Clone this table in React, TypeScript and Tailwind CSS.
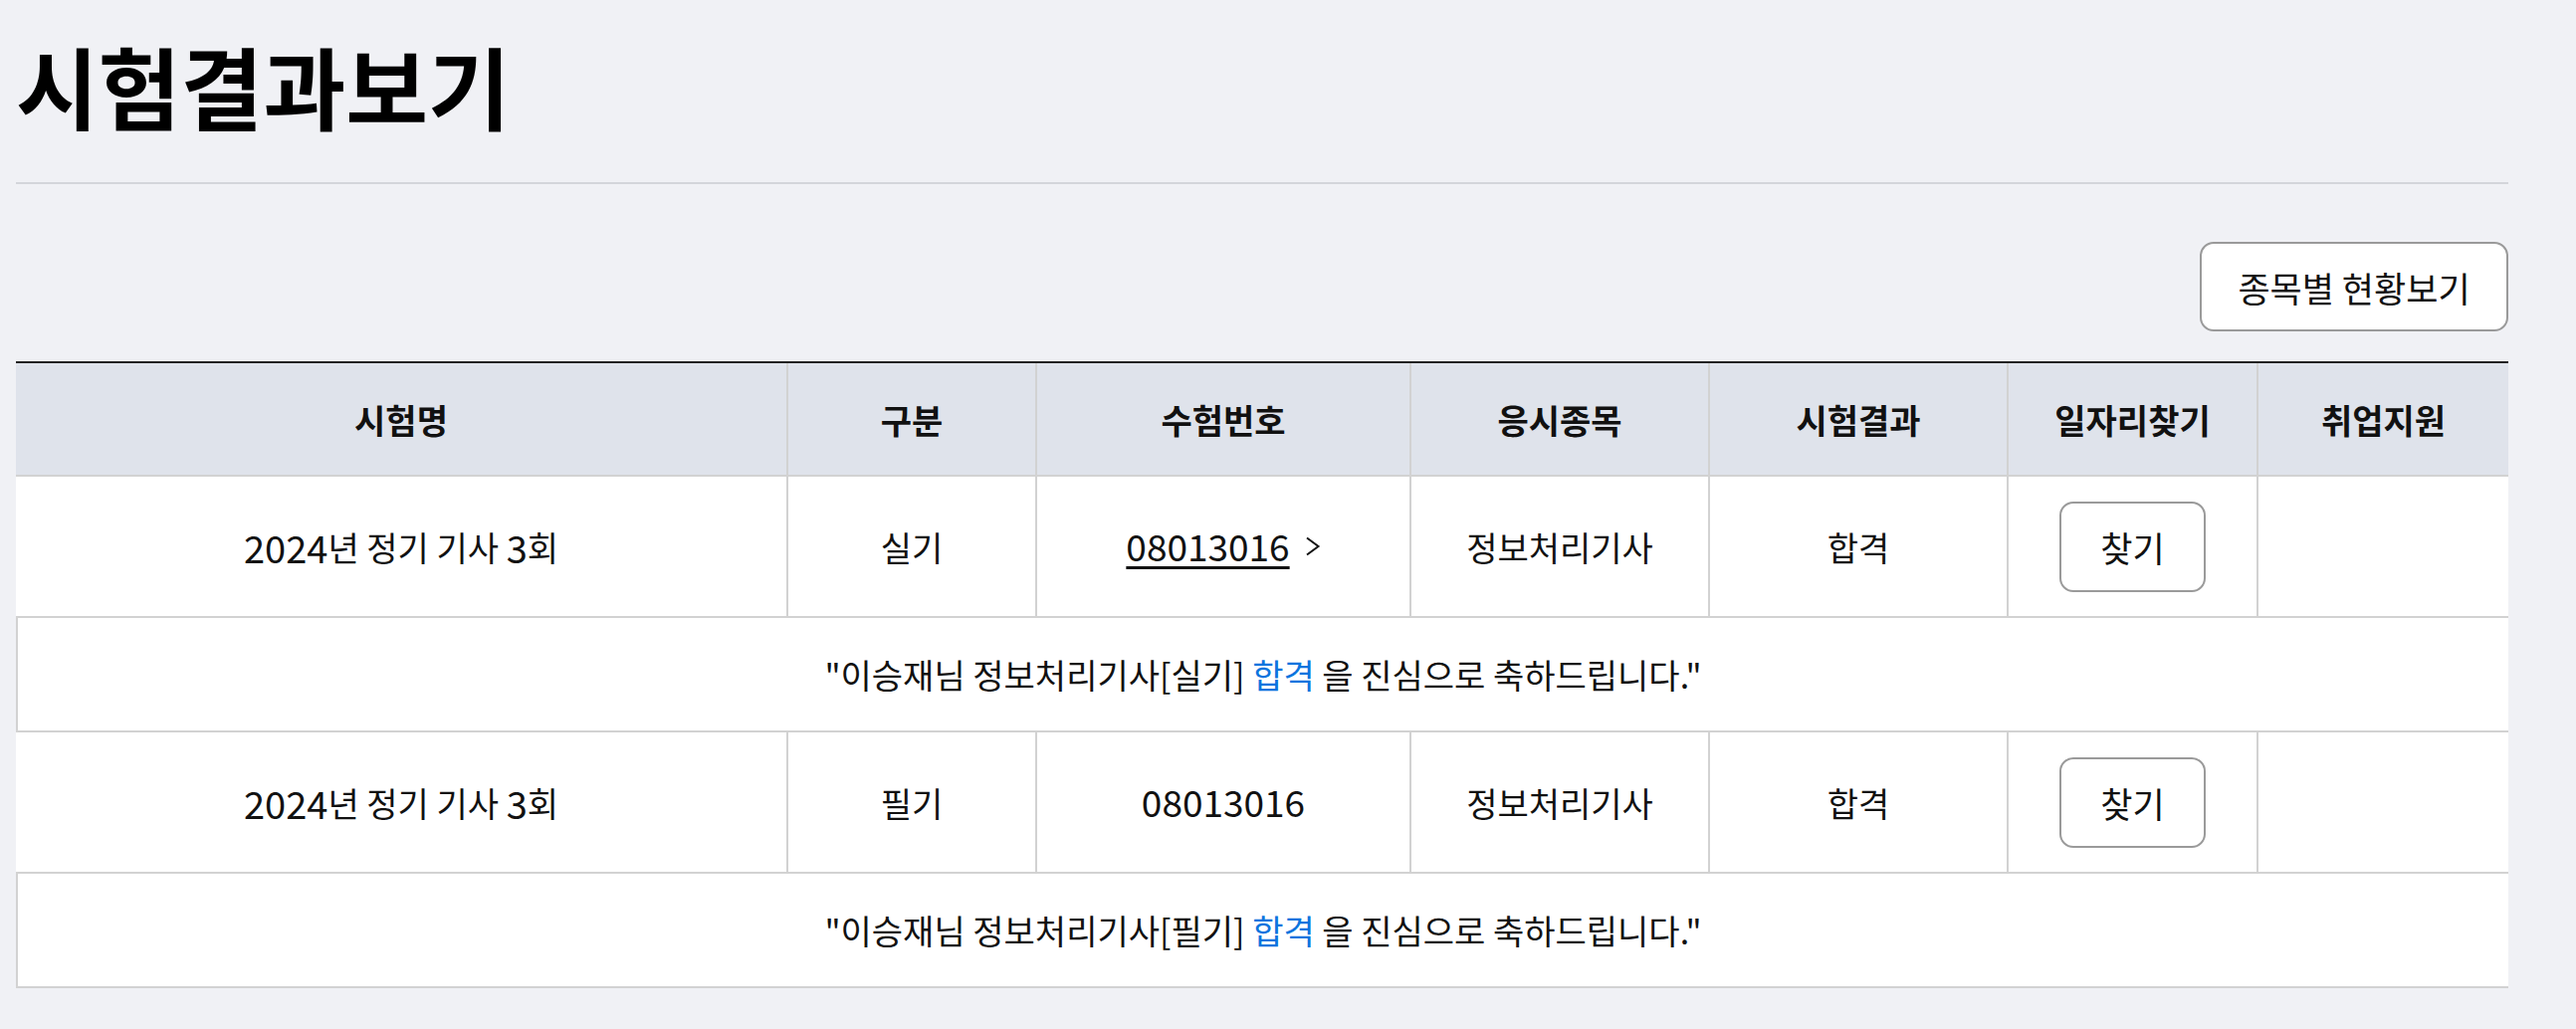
import React from "react";

const cols = ["w-[776px]", "w-[250px]", "w-[376px]", "w-[300px]", "w-[300px]", "w-[251px]", "w-[251px]"];

const headers = ["시험명", "구분", "수험번호", "응시종목", "시험결과", "일자리찾기", "취업지원"];

const Chevron: React.FC = () => (
  <svg width="16" height="20" viewBox="0 0 16 20" fill="none" className="ml-[15px]">
    <polyline points="2,1.5 13.5,10 2,18.5" stroke="#111" strokeWidth="2" strokeLinejoin="miter" />
  </svg>
);

const App: React.FC = () => {
  const results = [
    { id: 1, type: "실기", link: true },
    { id: 2, type: "필기", link: false },
  ];

  return (
    <div className="min-h-screen bg-[#f0f1f5] font-['Noto_Sans_CJK_KR','Noto_Sans',sans-serif] text-[#111]">
      <div className="ml-4 w-[2504px]">
        {/** 제목 */}
        <h1 className="pt-[40px] text-[90px] font-bold leading-none text-black">시험결과보기</h1>
        <div className="mt-[53px] h-[2px] bg-[#d3d5da]" />

        {/** 버튼 */}
        <div className="mt-[58px] flex justify-end">
          <button className="flex h-[90px] w-[310px] items-center justify-center rounded-[14px] border-2 border-[#9a9a9a] bg-white text-[35px] leading-none">
            종목별 현황보기
          </button>
        </div>

        {/** 결과 테이블 */}
        <div className="mt-[30px] border-t-2 border-[#222]">
          <div className="flex h-[114px] border-b-2 border-[#d2d2d2] bg-[#dfe3eb]">
            {headers.map((h, i) => (
              <div
                key={h}
                className={`${cols[i]} flex items-center justify-center text-[34px] font-bold ${i < headers.length - 1 ? "border-r-2 border-[#d2d2d2]" : ""}`}
              >
                {h}
              </div>
            ))}
          </div>

          {results.map((r) => (
            <div key={r.id}>
              <div className="flex h-[142px] border-b-2 border-[#d2d2d2] bg-white text-[34px]">
                <div className={`${cols[0]} flex items-center justify-center border-r-2 border-[#d2d2d2]`}>
                  <span className="text-[38px]">2024</span>년 정기 기사&nbsp;<span className="text-[38px]">3</span>회
                </div>
                <div className={`${cols[1]} flex items-center justify-center border-r-2 border-[#d2d2d2]`}>{r.type}</div>
                <div className={`${cols[2]} flex items-center justify-center border-r-2 border-[#d2d2d2]`}>
                  {r.link ? (
                    <>
                      <span className="text-[37px] underline decoration-[3px] underline-offset-[5px]">08013016</span>
                      <Chevron />
                    </>
                  ) : (
                    <span className="text-[37px]">08013016</span>
                  )}
                </div>
                <div className={`${cols[3]} flex items-center justify-center border-r-2 border-[#d2d2d2]`}>정보처리기사</div>
                <div className={`${cols[4]} flex items-center justify-center border-r-2 border-[#d2d2d2]`}>합격</div>
                <div className={`${cols[5]} flex items-center justify-center border-r-2 border-[#d2d2d2]`}>
                  <button className="flex h-[91px] w-[147px] items-center justify-center rounded-[14px] border-2 border-[#9a9a9a] bg-white text-[35px] leading-none">
                    찾기
                  </button>
                </div>
                <div className={`${cols[6]}`} />
              </div>
              <div className="flex h-[115px] items-center justify-center border-b-2 border-l-2 border-[#d2d2d2] bg-white text-[34px]">
                <p>
                  "이승재님 정보처리기사[{r.type}] <span className="text-[#0b74de]">합격</span> 을 진심으로 축하드립니다."
                </p>
              </div>
            </div>
          ))}
        </div>
      </div>
    </div>
  );
};

export default App;
